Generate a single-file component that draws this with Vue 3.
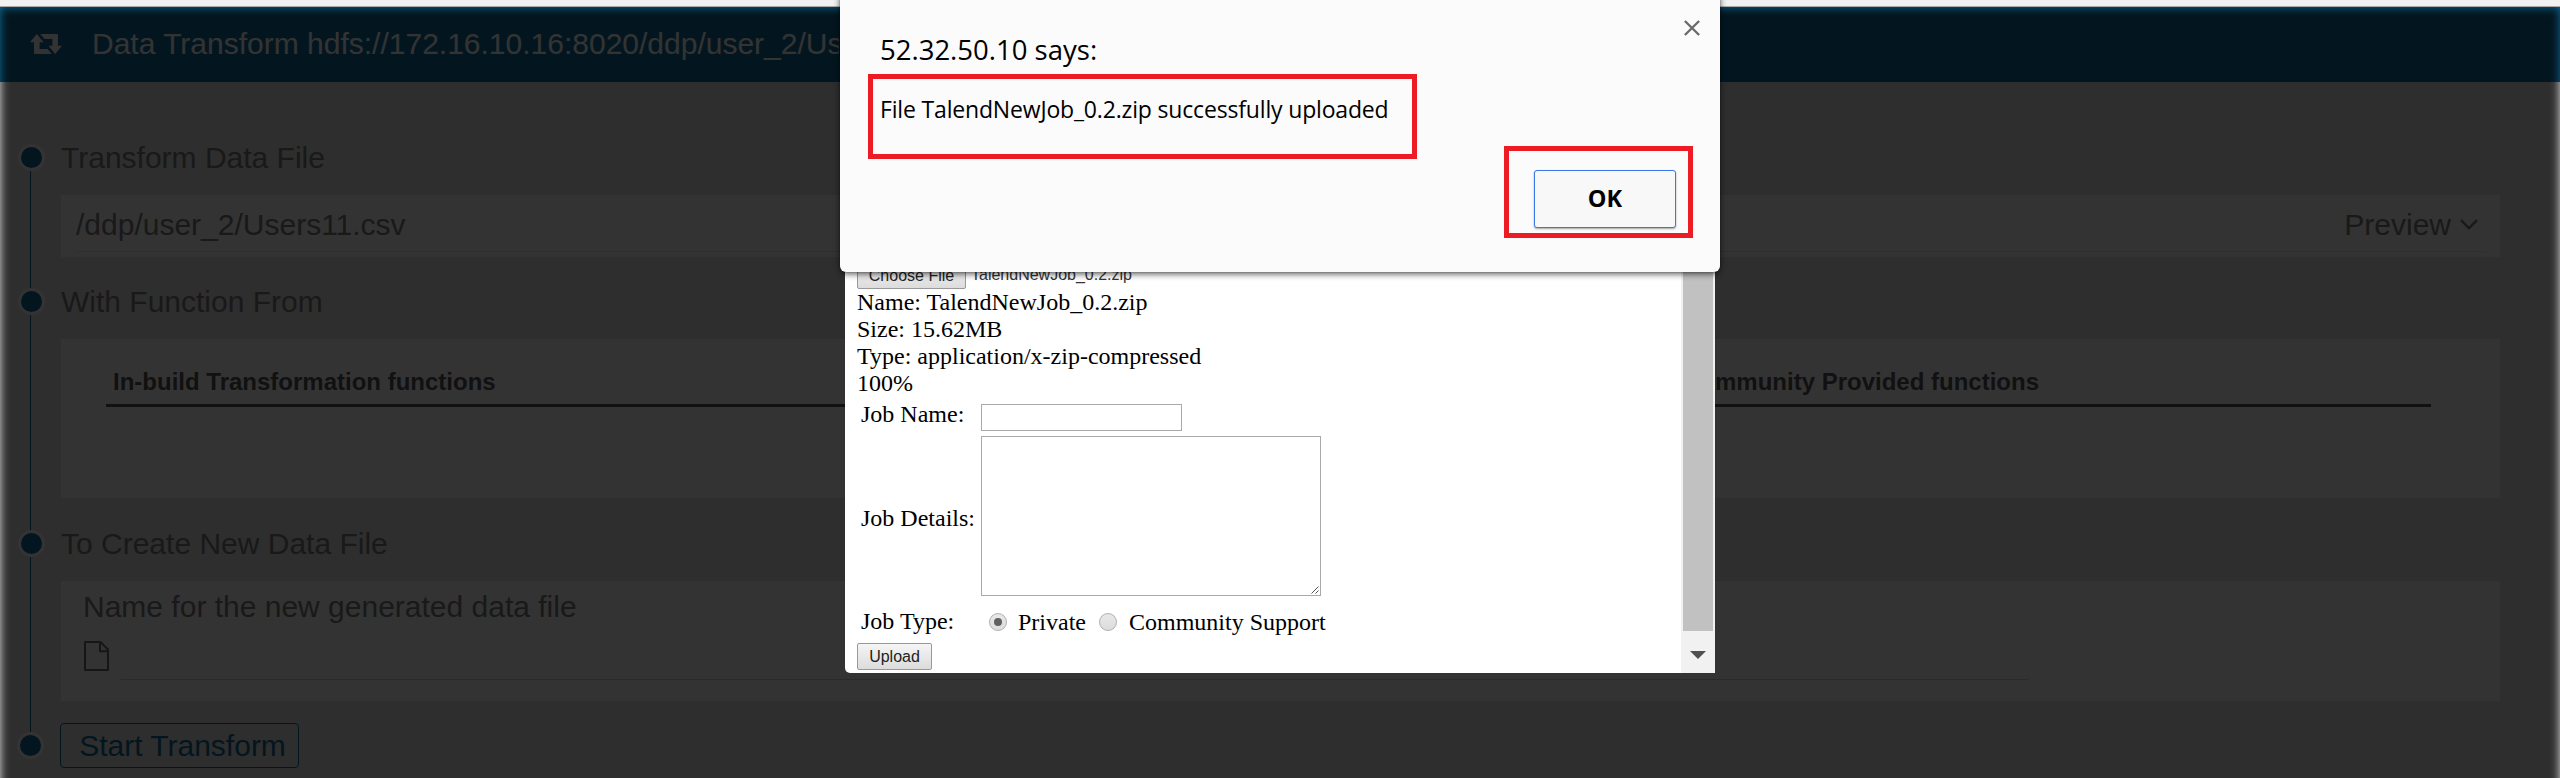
<script setup>
import { ref } from 'vue'

const filePath = '/ddp/user_2/Users11.csv'
const uploadInfo = [
  'Name: TalendNewJob_0.2.zip',
  'Size: 15.62MB',
  'Type: application/x-zip-compressed',
  '100%',
]
const jobType = ref('Private')
</script>

<template>
  <div class="screen">
    <div class="browser-edge"></div>
    <div class="page">
      <header class="header">
        <svg class="retweet" width="32" height="20" viewBox="0 0 32 20">
          <path d="M0 8.2 6.8 0l6.8 8.2H9.6V15H17.6l4.2 5H5.2Q4 20 4 18.8V8.2zM32 11.8 25.2 20l-6.8-8.2h4V5h-8L10.2 0h16.6Q28 0 28 1.2v10.6z" fill="#fff" />
        </svg>
        <span class="title">Data Transform hdfs://172.16.10.16:8020/ddp/user_2/Us</span>
      </header>

      <main class="timeline">
        <section class="step file-step">
          <h2 class="heading"><i class="dot"></i>Transform Data File</h2>
          <div class="card file-card">
            <div class="file-row">
              <span>{{ filePath }}</span>
              <span class="preview">Preview
                <svg width="18" height="11" viewBox="0 0 18 11"><path d="M1 1.2 9 9.2 17 1.2" fill="none" stroke="#7d7d7d" stroke-width="2.4" /></svg>
              </span>
            </div>
          </div>
        </section>

        <section class="step function-step">
          <h2 class="heading"><i class="dot"></i>With Function From</h2>
          <div class="card function-card">
            <div class="function-row">
              <b>In-build Transformation functions</b>
              <b>Community Provided functions</b>
            </div>
          </div>
        </section>

        <section class="step output-step">
          <h2 class="heading"><i class="dot"></i>To Create New Data File</h2>
          <div class="card output-card">
            <label class="output-label">Name for the new generated data file</label>
            <div class="output-row">
              <svg width="27" height="30" viewBox="0 0 27 30"><path d="M2 1H17.5L25 8.5V29H2zM17 1v9.2h8" fill="none" stroke="#707070" stroke-width="2" stroke-linejoin="round" /></svg>
              <div class="output-input"></div>
            </div>
          </div>
        </section>

        <section class="step start-step">
          <h2 class="heading"><i class="dot last"></i><button class="start">Start Transform</button></h2>
        </section>
      </main>
      <div class="shade"></div>
    </div>

    <div class="upload-frame">
      <div class="upload-form">
        <div class="picker">
          <button class="native">Choose File</button>
          <span class="picked">TalendNewJob_0.2.zip</span>
        </div>
        <p v-for="line in uploadInfo" :key="line" class="info">{{ line }}</p>
        <div class="fields">
          <span class="name-label">Job Name:</span>
          <div class="box name-box"></div>
          <span class="details-label">Job Details:</span>
          <div class="box details-box">
            <svg width="8" height="8" viewBox="0 0 8 8"><path d="M.5 7.5 7.5.5M4.5 7.5l3-3" stroke="#555" stroke-width="1" /></svg>
          </div>
          <span class="type-label">Job Type:</span>
          <div class="types">
            <i class="radio" :class="{ on: jobType === 'Private' }"></i><span class="private">Private</span>
            <i class="radio"></i><span class="community">Community Support</span>
          </div>
        </div>
        <button class="native upload">Upload</button>
      </div>
      <div class="scrollbar">
        <div class="thumb"></div>
        <div class="arrow"><svg width="16" height="8" viewBox="0 0 16 8"><path d="M0 0h16L8 8z" fill="#505050" /></svg></div>
      </div>
    </div>

    <div class="dialog">
      <div class="dialog-title">52.32.50.10 says:</div>
      <div class="dialog-message">File TalendNewJob_0.2.zip successfully uploaded</div>
      <button class="ok">OK</button>
      <svg class="close" width="16" height="16" viewBox="0 0 16 16"><path d="M.9 1l14.2 14M15.1 1l-14.2 14" stroke="#6b6b6b" stroke-width="2.4" /></svg>
      <div class="mark message-mark"></div>
      <div class="mark ok-mark"></div>
    </div>
  </div>
</template>

<style>
body { margin: 0; }
</style>

<style scoped>
* { box-sizing: border-box; }
button { margin: 0; padding: 0; }
svg { display: block; flex: none; }

.screen {
  position: relative;
  width: 2560px;
  height: 778px;
  overflow: hidden;
  font-family: "Liberation Sans", Arial, sans-serif;
}
.browser-edge { height: 7px; background: #f1f1f1; border-bottom: 1px solid #a9a9a9; }

.page { position: relative; height: 771px; overflow: hidden; background: #e6e6e6; color: #7d7d7d; }
.shade {
  position: absolute;
  inset: 0 0 -40px;
  background: rgba(0, 0, 0, 0.8);
  filter: blur(5px);
}
.header { display: flex; align-items: center; height: 75px; padding: 0 0 1px 30px; background: #0f6e9b; }
.title {
  width: 747px;
  margin-left: 30px;
  overflow: hidden;
  font-size: 30px;
  line-height: 46px;
  color: #fff;
  white-space: nowrap;
}

.timeline { position: relative; padding: 53px 60px 0 61px; }
.timeline::before {
  content: "";
  position: absolute;
  left: 30px;
  top: 76px;
  width: 1px;
  height: 588px;
  background: #0f6e9b;
}
.heading {
  position: relative;
  display: flex;
  align-items: center;
  height: 45px;
  margin: 0 0 15px;
  font-size: 30px;
  font-weight: 400;
  line-height: 45px;
}
.dot {
  position: absolute;
  left: -43px;
  top: 9px;
  width: 27px;
  height: 27px;
  border: 3px solid #fff;
  border-radius: 50%;
  background: #0f6e9b;
}
.dot.last { left: -44px; }
.card { background: #fff; }
.file-card { height: 62px; margin-bottom: 22px; padding: 0 14px 5px 15px; }
.file-row {
  display: flex;
  justify-content: space-between;
  height: 57px;
  padding-right: 8px;
  border-bottom: 1px solid #ebebeb;
  font-size: 30px;
  line-height: 59px;
}
.preview { display: flex; align-items: center; gap: 9px; height: 59px; }
.function-card { height: 159px; margin-bottom: 23px; padding: 28px 69px 0 45px; }
.function-row {
  display: grid;
  grid-template-columns: 1570px 1fr;
  height: 40px;
  padding-left: 7px;
  border-bottom: 3px solid #555;
  color: #555;
  font-size: 24px;
  line-height: 30px;
}
.output-card { height: 120px; margin-bottom: 22px; padding: 3px 470px 0 22px; }
.output-label { display: block; font-size: 30px; line-height: 46px; }
.output-row { display: flex; align-items: flex-start; gap: 9px; padding-top: 11px; }
.output-input { flex: 1; height: 39px; border-bottom: 1px solid #d0d0d0; border-radius: 4px; }
.start {
  width: 239px;
  height: 45px;
  margin-left: -1px;
  border: 1px solid #0f6e9b;
  border-radius: 4px;
  background: transparent;
  color: #0f6e9b;
  font: 30px/43px "Liberation Sans", Arial, sans-serif;
  padding-left: 6px;
}

.upload-frame {
  position: absolute;
  left: 845px;
  top: 200px;
  width: 870px;
  height: 473px;
  display: flex;
  justify-content: space-between;
  overflow: hidden;
  border-bottom-left-radius: 5px;
  background: #fff;
}
.upload-form { padding: 62px 0 0 12px; color: #000; font: 24px/27px "Liberation Serif", "Times New Roman", serif; }
.picker { display: flex; height: 27px; font: 16px/35px "Liberation Sans", Arial, sans-serif; }
.native {
  display: block;
  width: 109px;
  height: 27px;
  border: 1px solid #999;
  border-radius: 2px;
  background: linear-gradient(#f5f5f5, #dcdcdc);
  color: #222;
  font: 16px/25px "Liberation Sans", Arial, sans-serif;
}
.picked { margin-left: 5px; line-height: 26px; color: #333; }
.info { margin: 0; height: 27px; }
.fields {
  display: grid;
  grid-template-columns: 120px auto;
  grid-template-rows: 27px 160px 26px;
  row-gap: 5px;
  align-items: center;
  margin: 7px 0 21px 4px;
  height: 218px;
}
.box { border: 1px solid #a9a9a9; background: #fff; }
.name-box { width: 201px; height: 27px; }
.name-label { position: relative; top: -3px; }
.details-box { display: flex; align-items: flex-end; justify-content: flex-end; width: 340px; height: 160px; padding: 1px; }
.details-label { position: relative; top: 2px; }
.type-label { position: relative; top: 7px; }
.types { display: flex; align-items: center; position: relative; top: 8px; padding-left: 8px; }
.radio {
  display: flex;
  align-items: center;
  justify-content: center;
  width: 18px;
  height: 18px;
  margin-top: -1px;
  border: 1px solid #b0b0b0;
  border-radius: 50%;
  background: linear-gradient(#e8e8e8, #dcdcdc);
}
.radio.on::after { content: ""; width: 8px; height: 8px; border-radius: 50%; background: #606060; }
.private { margin: 0 13px 0 11px; }
.community { margin-left: 12px; }
.upload { width: 75px; }

.scrollbar { width: 34px; padding: 0 2px; background: #f1f1f1; }
.thumb { height: 431px; background: #c1c1c1; }
.arrow { display: flex; justify-content: center; padding-top: 20px; }

.dialog {
  position: absolute;
  left: 840px;
  top: -8px;
  width: 880px;
  height: 280px;
  padding: 34px 0 0 40px;
  border-radius: 6px;
  background: #fbfbfb;
  box-shadow: 0 2px 6px rgba(0, 0, 0, 0.65), 0 0 1px rgba(0, 0, 0, 0.8);
  color: #000;
  font-family: "Open Sans", "Noto Sans", sans-serif;
}
.dialog-title { font-size: 27.5px; line-height: 48px; }
.dialog-message { margin-top: 12px; font-size: 23px; line-height: 46px; letter-spacing: -0.17px; }
.ok {
  display: block;
  width: 142px;
  height: 58px;
  margin: 38px 0 0 654px;
  padding-bottom: 2px;
  border: 1px solid #3b78e7;
  border-radius: 3px;
  background: #f8f8f8;
  box-shadow: 0 1px 2px rgba(0, 0, 0, 0.35);
  color: #000;
  font: bold 23.5px/54px "Open Sans", "Noto Sans", sans-serif;
}
.close { position: absolute; right: 20px; top: 28px; }
.mark { position: absolute; border: 5px solid #ed1c24; }
.message-mark { left: 28px; top: 82px; width: 549px; height: 85px; }
.ok-mark { left: 664px; top: 154px; width: 189px; height: 92px; }
</style>
